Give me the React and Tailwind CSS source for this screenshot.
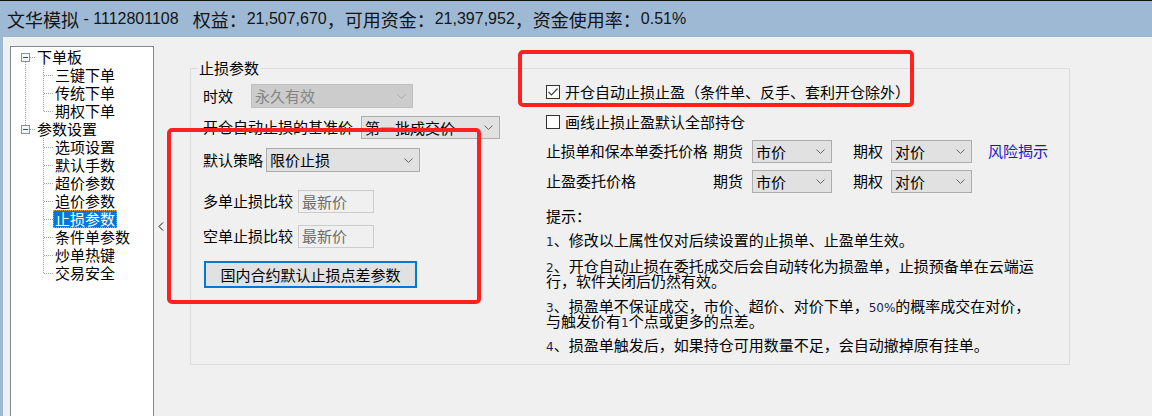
import React from 'react';

const DOT = '#a0a0a0';

function CellA({ kind }) {
  return (
    <svg width="24" height="18" className="shrink-0 block" shapeRendering="crispEdges">
      {kind === 'vline' && (
        <line x1="14.5" y1="0" x2="14.5" y2="18" stroke={DOT} strokeDasharray="1 1" />
      )}
      {(kind === 'first' || kind === 'last') && (
        <>
          {kind === 'first' && (
            <line x1="14.5" y1="14" x2="14.5" y2="18" stroke={DOT} strokeDasharray="1 1" />
          )}
          {kind === 'last' && (
            <line x1="14.5" y1="0" x2="14.5" y2="5" stroke={DOT} strokeDasharray="1 1" />
          )}
          <line x1="19" y1="9.5" x2="24" y2="9.5" stroke={DOT} strokeDasharray="1 1" />
          <rect x="10.5" y="5.5" width="8" height="8" fill="#f6f6f6" stroke="#8e8f8f" />
          <line x1="12" y1="9.5" x2="17" y2="9.5" stroke="#1c4fa0" />
        </>
      )}
    </svg>
  );
}

function CellB({ last }) {
  return (
    <svg width="18" height="18" className="shrink-0 block" shapeRendering="crispEdges">
      <line x1="8.5" y1="0" x2="8.5" y2={last ? 10 : 18} stroke={DOT} strokeDasharray="1 1" />
      <line x1="9" y1="9.5" x2="18" y2="9.5" stroke={DOT} strokeDasharray="1 1" />
    </svg>
  );
}

const treeRows = [
  { t: '下单板', lvl: 0, a: 'first' },
  { t: '三键下单', lvl: 1, a: 'vline' },
  { t: '传统下单', lvl: 1, a: 'vline' },
  { t: '期权下单', lvl: 1, a: 'vline', last: true },
  { t: '参数设置', lvl: 0, a: 'last' },
  { t: '选项设置', lvl: 1, a: 'none' },
  { t: '默认手数', lvl: 1, a: 'none' },
  { t: '超价参数', lvl: 1, a: 'none' },
  { t: '追价参数', lvl: 1, a: 'none' },
  { t: '止损参数', lvl: 1, a: 'none', sel: true },
  { t: '条件单参数', lvl: 1, a: 'none' },
  { t: '炒单热键', lvl: 1, a: 'none' },
  { t: '交易安全', lvl: 1, a: 'none', last: true },
];

function Chevron({ color = '#666' }) {
  return (
    <svg width="9" height="5" viewBox="0 0 9 5" className="block shrink-0">
      <path d="M0.5 0.5 L4.5 4.5 L8.5 0.5" fill="none" stroke={color} strokeWidth="1" />
    </svg>
  );
}

function Select({ cls, text, disabled }) {
  return (
    <div
      className={
        'flex shrink-0 items-center justify-between border pl-[3px] pr-[6px] ' +
        (disabled
          ? 'border-[#bfbfbf] bg-[#cccccc] text-[#838383] '
          : 'border-[#adadad] bg-[#e1e1e1] text-black ') +
        cls
      }
    >
      <span className="whitespace-nowrap leading-[18px]">{text}</span>
      <Chevron color={disabled ? '#a8a8a8' : '#666'} />
    </div>
  );
}

function ReadBox({ text }) {
  return (
    <div className="flex h-[23px] w-[76px] shrink-0 items-center border border-[#cccccc] bg-[#f0f0f0] pl-[3px] text-[#6d6d6d]">
      <span className="leading-[18px]">{text}</span>
    </div>
  );
}

function Checkbox({ checked }) {
  return (
    <div className="flex h-[14px] w-[14px] shrink-0 items-center justify-center border border-[#333333] bg-white">
      {checked && (
        <svg width="12" height="12" viewBox="0 0 12 12" className="block">
          <path d="M1.5 6 L4.5 9 L10.5 2.5" fill="none" stroke="#444" strokeWidth="1.2" />
        </svg>
      )}
    </div>
  );
}

function D({ children }) {
  return (
    <span className="font-['DejaVu_Sans',sans-serif] text-[12px] leading-[0px] text-[#1c1c50]">
      {children}
    </span>
  );
}

function N({ children }) {
  return <span className="font-['Liberation_Sans',sans-serif] text-[16px]">{children}</span>;
}

export default function App() {
  return (
    <div className="relative h-[416px] w-[1152px] overflow-hidden bg-[#f0f0f0] font-['Noto_Sans_CJK_SC',sans-serif] text-[15px] text-black">
      {/* title bar */}
      <div className="h-[1px] bg-[#111]" />
      <div className="flex h-[36px] items-center whitespace-nowrap bg-[#9eb9d4] pl-[7px] text-[18px] text-[#141414]">
        <span>文华模拟</span>
        <N>&nbsp;-&nbsp;1112801108</N>
        <span className="ml-[14px]">权益：</span>
        <N>21,507,670</N>
        <span>，可用资金：</span>
        <N>21,397,952</N>
        <span>，资金使用率：</span>
        <N>0.51%</N>
      </div>

      {/* body */}
      <div className="flex h-[379px]">
        <div className="w-[3px] shrink-0 bg-[#9eb9d4]" />
        <div className="w-[7px] shrink-0" />
        {/* tree */}
        <div className="mt-[9px] h-[400px] w-[144px] shrink-0 border border-[#828790] bg-white pt-[1px]">
          {treeRows.map((r) => (
            <div key={r.t} className="flex h-[18px] items-center">
              <CellA kind={r.a} />
              {r.lvl === 1 && <CellB last={r.last} />}
              <span
                className={
                  'h-[18px] whitespace-nowrap border border-dotted px-[1px] leading-[16px] ' +
                  (r.sel ? 'border-[#e8a040] bg-[#0078d7] text-white' : 'border-transparent')
                }
              >
                {r.t}
              </span>
            </div>
          ))}
        </div>
        {/* collapse arrow */}
        <div className="flex w-[36px] shrink-0 items-center pl-[4px]">
          <svg width="6" height="9" viewBox="0 0 6 9" className="block">
            <path d="M5 0.5 L1 4.5 L5 8.5" fill="none" stroke="#111" strokeWidth="1" />
          </svg>
        </div>

        {/* group box */}
        <fieldset className="mt-[22px] h-[306px] w-[880px] shrink-0 border border-[#dcdcdc]">
          <legend className="ml-[7px] px-[1px] leading-[18px]">止损参数</legend>
          <div className="flex">
            {/* left column */}
            <div className="flex w-[355px] shrink-0 flex-col pl-[12px]">
              <div className="mt-[7px] flex h-[24px] items-center">
                <span className="w-[48px] shrink-0 whitespace-nowrap">时效</span>
                <Select cls="h-[24px] w-[162px]" text="永久有效" disabled />
              </div>
              <div className="mt-[8px] flex h-[23px] items-center">
                <span className="w-[158px] shrink-0 whitespace-nowrap">开仓自动止损的基准价</span>
                <Select cls="h-[23px] w-[139px]" text="第一批成交价" />
              </div>
              <div className="mt-[9px] flex h-[24px] items-center">
                <span className="w-[63px] shrink-0 whitespace-nowrap">默认策略</span>
                <Select cls="h-[24px] w-[154px]" text="限价止损" />
              </div>
              <div className="mt-[18px] flex h-[23px] items-center">
                <span className="w-[95px] shrink-0 whitespace-nowrap">多单止损比较</span>
                <ReadBox text="最新价" />
              </div>
              <div className="mt-[11px] flex h-[24px] items-center">
                <span className="w-[95px] shrink-0 whitespace-nowrap">空单止损比较</span>
                <ReadBox text="最新价" />
              </div>
              <div className="ml-[1px] mt-[13px] flex h-[27px] w-[213px] items-center justify-center border-2 border-[#0078d7] bg-[#e1e1e1]">
                <span className="whitespace-nowrap leading-[18px]">国内合约默认止损点差参数</span>
              </div>
            </div>

            {/* right column */}
            <div className="flex flex-1 flex-col">
              <div className="mt-[5px] flex h-[20px] items-center">
                <Checkbox checked />
                <span className="ml-[5px] whitespace-nowrap">开仓自动止损止盈（条件单、反手、套利开仓除外）</span>
              </div>
              <div className="mt-[10px] flex h-[20px] items-center">
                <Checkbox />
                <span className="ml-[5px] whitespace-nowrap">画线止损止盈默认全部持仓</span>
              </div>
              <div className="mt-[8px] flex h-[23px] items-center">
                <span className="w-[167px] shrink-0 whitespace-nowrap text-[14.7px]">止损单和保本单委托价格</span>
                <span className="w-[39px] shrink-0 whitespace-nowrap">期货</span>
                <Select cls="h-[23px] w-[80px]" text="市价" />
                <span className="ml-[21px] w-[38px] shrink-0 whitespace-nowrap">期权</span>
                <Select cls="h-[23px] w-[81px]" text="对价" />
                <span className="ml-[16px] whitespace-nowrap text-[#1515c8]">风险揭示</span>
              </div>
              <div className="mt-[7px] flex h-[23px] items-center">
                <span className="w-[167px] shrink-0 whitespace-nowrap">止盈委托价格</span>
                <span className="w-[39px] shrink-0 whitespace-nowrap">期货</span>
                <Select cls="h-[23px] w-[80px]" text="市价" />
                <span className="ml-[21px] w-[38px] shrink-0 whitespace-nowrap">期权</span>
                <Select cls="h-[23px] w-[81px]" text="对价" />
              </div>

              <div className="mt-[15px] whitespace-nowrap leading-[15px]">提示：</div>
              <p className="mt-[9px] whitespace-nowrap leading-[15px]">
                <D>1</D>、修改以上属性仅对后续设置的止损单、止盈单生效。
              </p>
              <p className="mt-[11px] whitespace-nowrap leading-[15px]">
                <D>2</D>、开仓自动止损在委托成交后会自动转化为损盈单，止损预备单在云端运
                <br />
                行，软件关闭后仍然有效。
              </p>
              <p className="mt-[10px] whitespace-nowrap leading-[15px]">
                <D>3</D>、损盈单不保证成交，市价、超价、对价下单，<D>50%</D>的概率成交在对价，
                <br />
                与触发价有<D>1</D>个点或更多的点差。
              </p>
              <p className="mt-[9px] whitespace-nowrap leading-[15px]">
                <D>4</D>、损盈单触发后，如果持仓可用数量不足，会自动撤掉原有挂单。
              </p>
            </div>
          </div>
        </fieldset>
      </div>

      {/* red annotation boxes */}
      <div className="pointer-events-none absolute left-[167px] top-[128px] h-[176px] w-[314px] rounded-[5px] border-[4px] border-[#ff2020]" />
      <div className="pointer-events-none absolute left-[518px] top-[50px] h-[57px] w-[396px] rounded-[5px] border-[4px] border-[#ff2020]" />
    </div>
  );
}
